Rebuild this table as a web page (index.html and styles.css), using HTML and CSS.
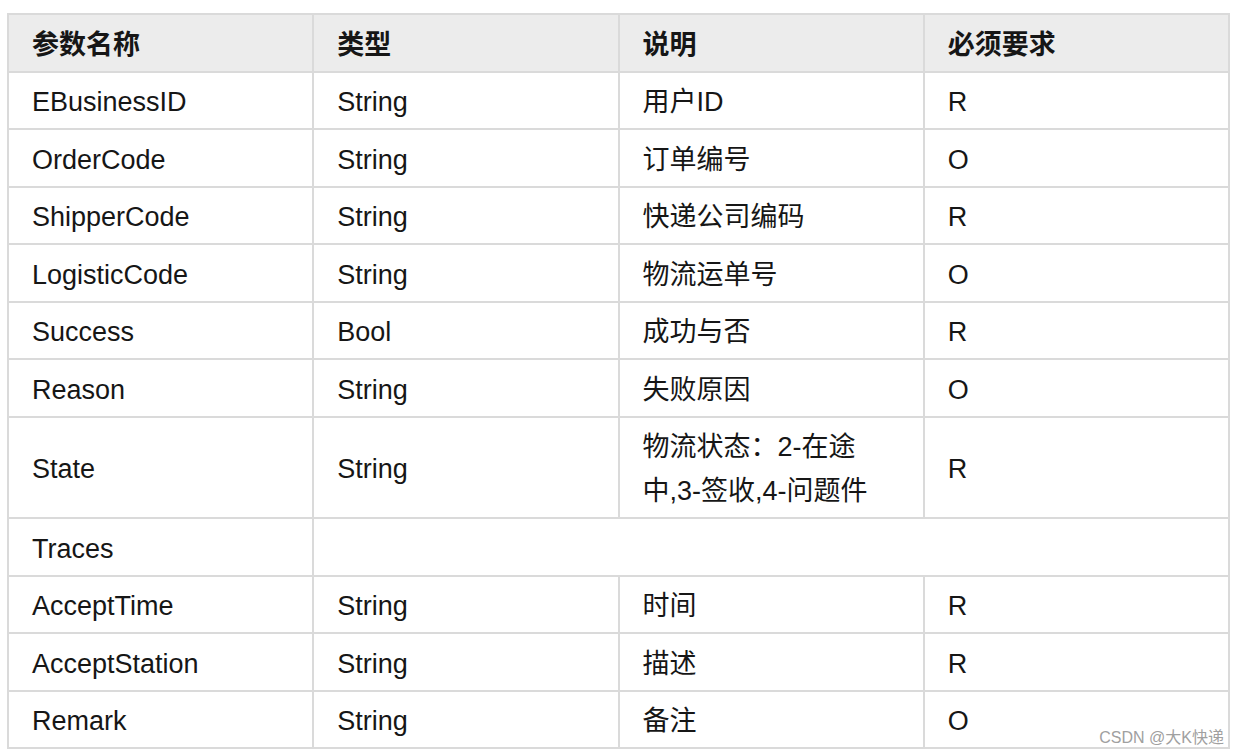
FILE: index.html
```html
<!DOCTYPE html>
<html lang="zh-CN">
<head>
<meta charset="utf-8">
<link rel="stylesheet" href="styles.css">
</head>
<body>
<div class="wrap">
<table class="params">
  <thead>
    <tr><th>参数名称</th><th>类型</th><th>说明</th><th>必须要求</th></tr>
  </thead>
  <tbody>
    <tr><td>EBusinessID</td><td>String</td><td>用户ID</td><td>R</td></tr>
    <tr><td>OrderCode</td><td>String</td><td>订单编号</td><td>O</td></tr>
    <tr><td>ShipperCode</td><td>String</td><td>快递公司编码</td><td>R</td></tr>
    <tr><td>LogisticCode</td><td>String</td><td>物流运单号</td><td>O</td></tr>
    <tr><td>Success</td><td>Bool</td><td>成功与否</td><td>R</td></tr>
    <tr><td>Reason</td><td>String</td><td>失败原因</td><td>O</td></tr>
    <tr><td>State</td><td>String</td><td>物流状态：2-在途<br>中,3-签收,4-问题件</td><td>R</td></tr>
    <tr><td>Traces</td><td colspan="3"></td></tr>
    <tr><td>AcceptTime</td><td>String</td><td>时间</td><td>R</td></tr>
    <tr><td>AcceptStation</td><td>String</td><td>描述</td><td>R</td></tr>
    <tr><td>Remark</td><td>String</td><td>备注</td><td>O</td></tr>
  </tbody>
</table>
<div class="watermark">CSDN @大K快递</div>
</div>
</body>
</html>
```

FILE: styles.css
```css
html, body {
  margin: 0;
  padding: 0;
  background: #fff;
}
.wrap {
  position: relative;
  padding: 13px 0 0 7px;
  width: 1223px;
}
.params {
  border-collapse: collapse;
  width: 1223px;
  table-layout: fixed;
  font-family: "Liberation Sans", "Noto Sans CJK SC", sans-serif;
  font-size: 27px;
  color: #161616;
}
.params th, .params td {
  border: 2px solid #dadada;
  padding: 7.5px 23px 4px;
  line-height: 44px;
  text-align: left;
  vertical-align: middle;
  white-space: nowrap;
}
.params th {
  background: #ececec;
  font-weight: bold;
}
.watermark {
  position: absolute;
  right: 6px;
  top: 728px;
  font-family: "Liberation Sans", "Noto Sans CJK SC", sans-serif;
  font-size: 16px;
  line-height: 20px;
  color: #a0a0a0;
}
```
